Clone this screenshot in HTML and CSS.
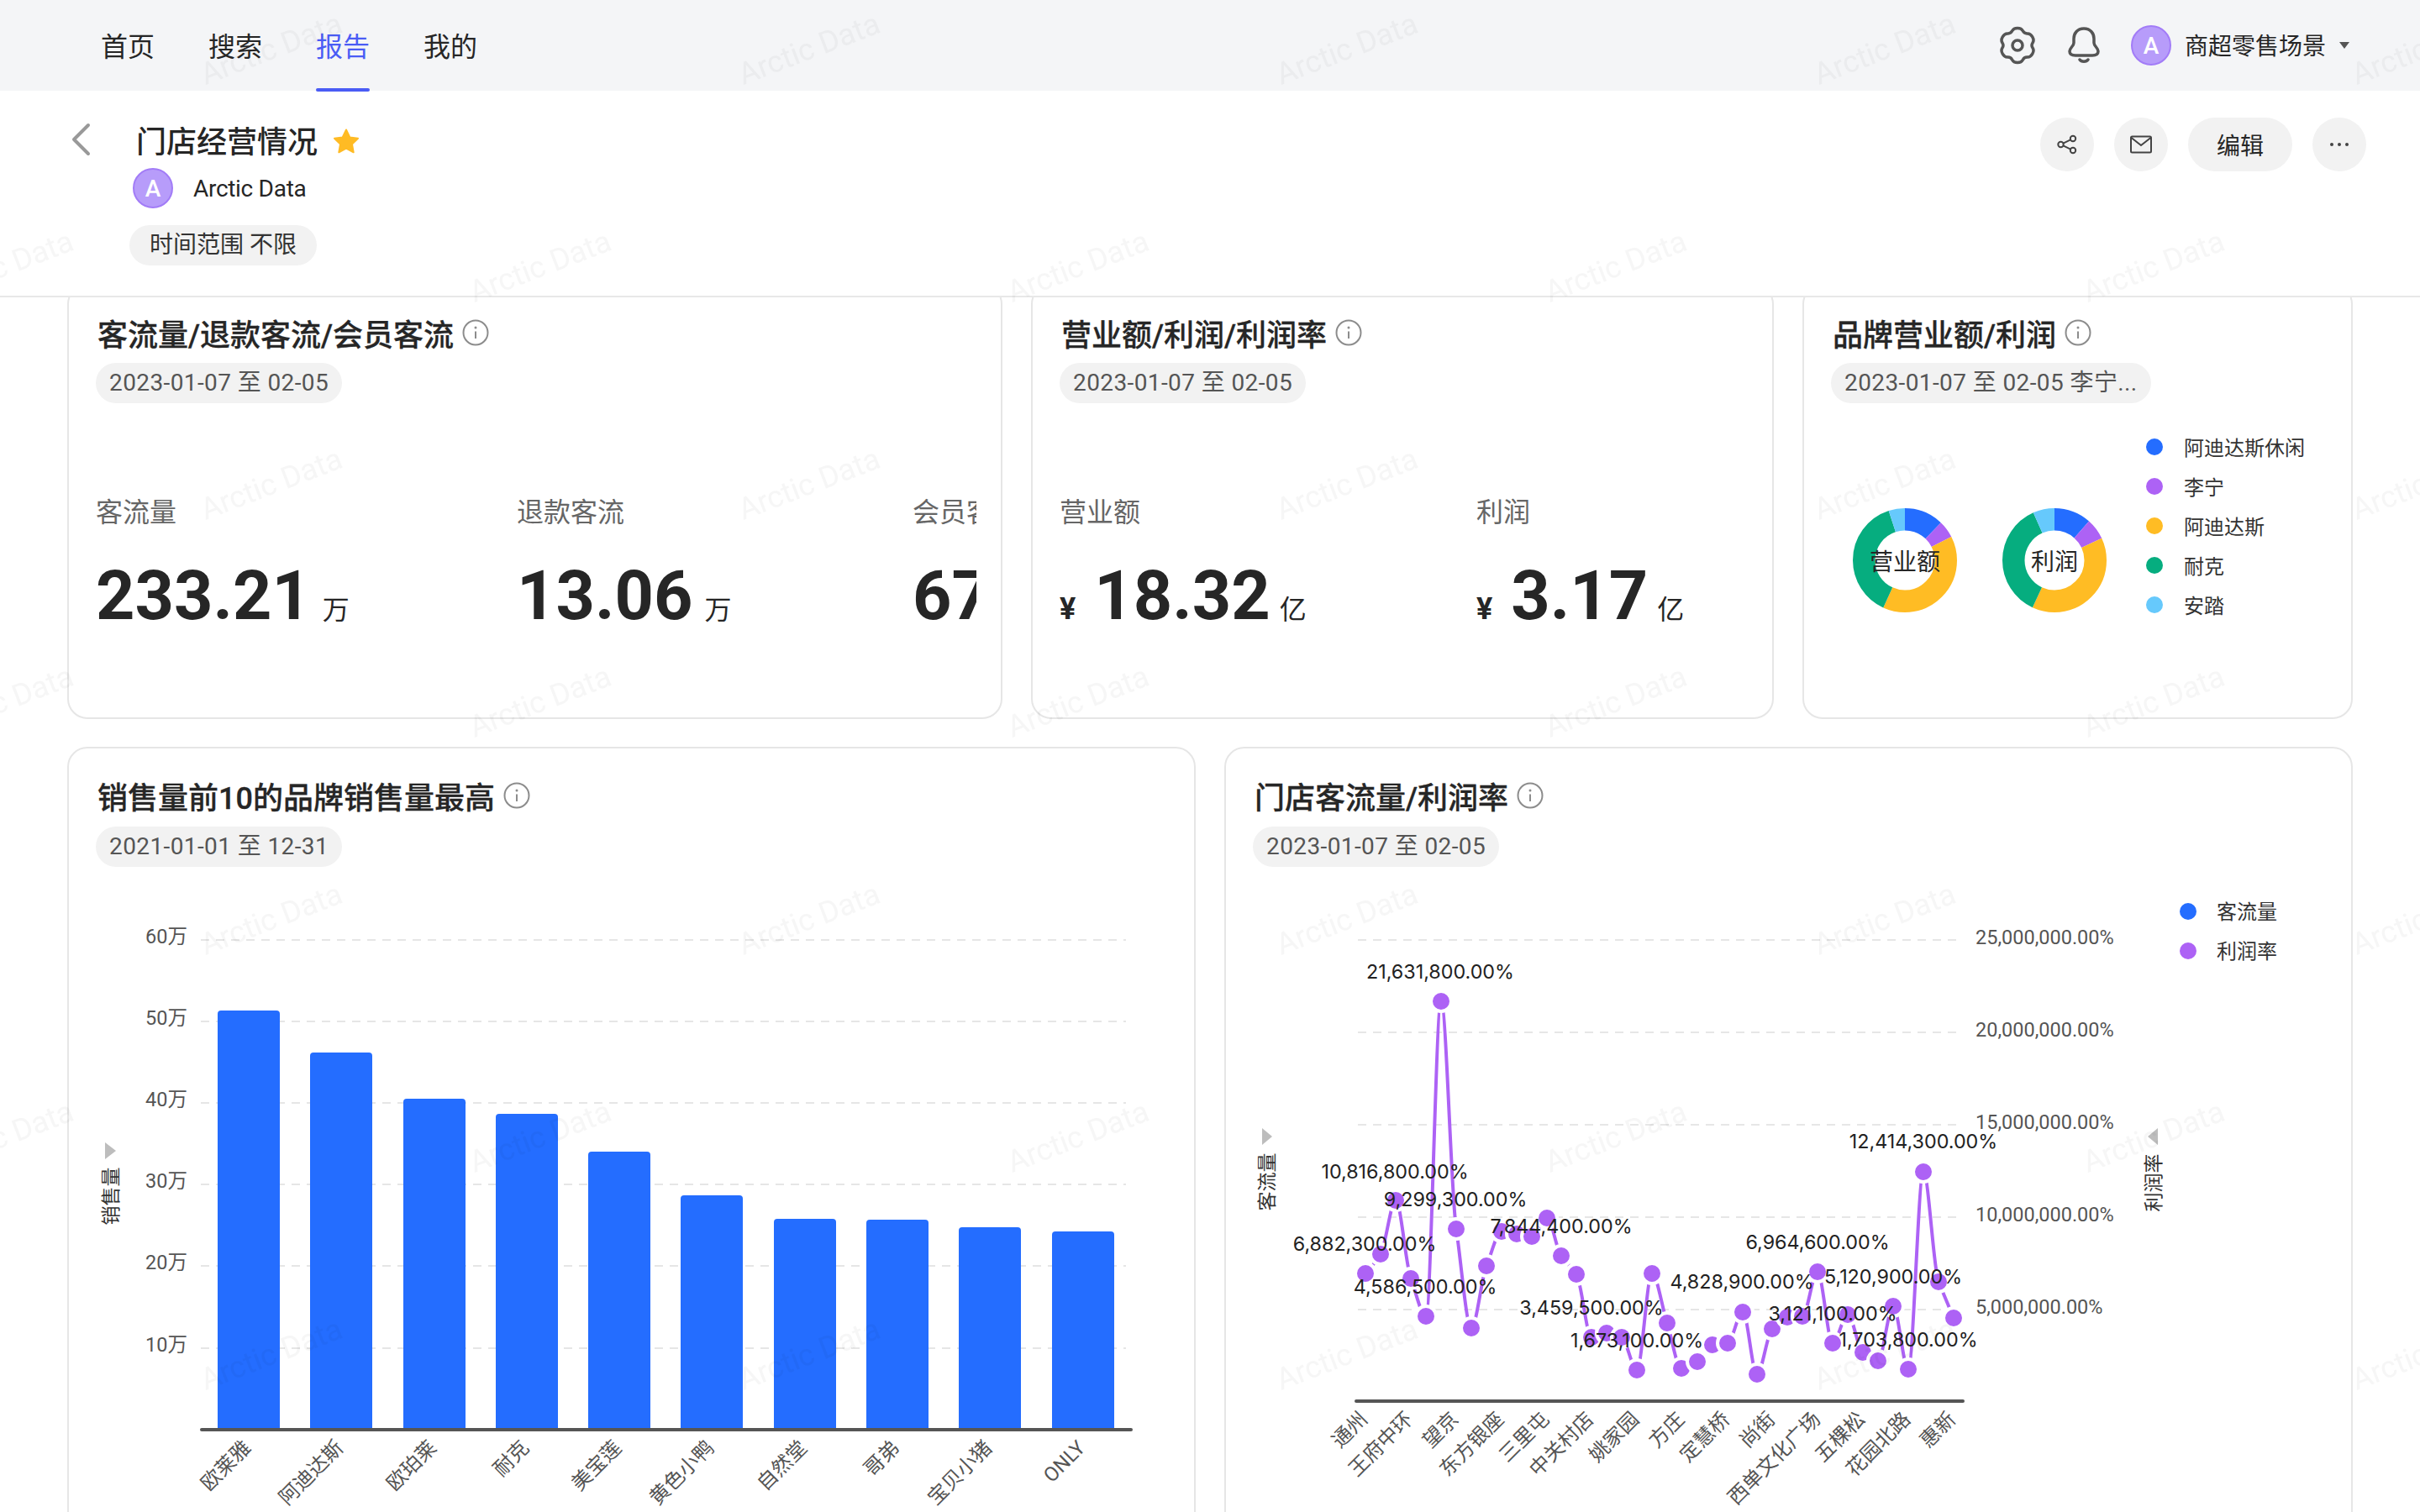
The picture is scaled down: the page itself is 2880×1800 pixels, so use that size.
FILE: index.html
```html
<!DOCTYPE html>
<html lang="zh-CN">
<head>
  <meta charset="UTF-8">
  <title>门店经营情况</title>
  <link rel="stylesheet" href="styles.css">
</head>
<body>
  <header class="topbar">
    <nav class="nav">
      <a class="nav-item">首页</a>
      <a class="nav-item">搜索</a>
      <a class="nav-item active">报告</a>
      <a class="nav-item">我的</a>
    </nav>
    <div class="topbar-right">
      <svg class="icon-gear" viewBox="-2 -1 44 46">
        <path d="M20 1.5Q24.7 1.5 26.35 4.8Q28 8.1 31.7 7.9Q35.4 7.7 37.75 11.8Q40.1 15.9 38.05 18.95Q36 22 38.05 25.05Q40.1 28.1 37.75 32.2Q35.4 36.3 31.7 36.1Q28 35.9 26.35 39.2Q24.7 42.5 20 42.5Q15.3 42.5 13.65 39.2Q12 35.9 8.3 36.1Q4.6 36.3 2.25 32.2Q-.1 28.1 1.95 25.05Q4 22 1.95 18.95Q-.1 15.9 2.25 11.8Q4.6 7.7 8.3 7.9Q12 8.1 13.65 4.8Q15.3 1.5 20 1.5Z"/>
        <circle cx="20" cy="22" r="6"/>
      </svg>
      <svg class="icon-bell" viewBox="0 0 38 44">
        <path d="M19 2C11 2 7 8 7 14V19C7 23 2 25 2 29C2 33 6 34 9 34H29C32 34 36 33 36 29C36 25 31 23 31 19V14C31 8 27 2 19 2Z"/>
        <path d="M14 39C16 42 22 42 24 39"/>
      </svg>
      <span class="avatar">A</span>
      <span class="scene-name">商超零售场景</span>
      <span class="caret"></span>
    </div>
  </header>

  <section class="report-head">
    <svg class="icon-back" viewBox="0 0 24 40"><path d="M21 3L4 20L21 37"/></svg>
    <div class="report-info">
      <div class="report-title">
        <h1>门店经营情况</h1>
        <svg class="icon-star" viewBox="0 0 32 30"><path d="M16 1.5L20.3 10.4L30 11.8L23 18.6L24.7 28.3L16 23.7L7.3 28.3L9 18.6L2 11.8L11.7 10.4Z"/></svg>
      </div>
      <div class="report-author">
        <span class="avatar">A</span>
        <span class="author-name">Arctic Data</span>
      </div>
      <span class="tag">时间范围 不限</span>
    </div>
    <div class="report-actions">
      <button class="round-btn">
        <svg class="icon-line" width="24" height="24" viewBox="0 0 24 24">
          <circle cx="4.5" cy="12" r="3.2"/><circle cx="19" cy="5" r="3.2"/><circle cx="19" cy="19" r="3.2"/>
          <path d="M7.4 10.6L16.1 6.4M7.4 13.4L16.1 17.6"/>
        </svg>
      </button>
      <button class="round-btn">
        <svg class="icon-line" width="28" height="22" viewBox="0 0 28 22">
          <rect x="2" y="1.5" width="24" height="19" rx="1.5"/>
          <path d="M2.5 3L14 12L25.5 3"/>
        </svg>
      </button>
      <button class="round-btn wide">编辑</button>
      <button class="round-btn">
        <svg width="24" height="6" viewBox="0 0 24 6"><circle class="dot" cx="3" cy="3" r="2"/><circle class="dot" cx="12" cy="3" r="2"/><circle class="dot" cx="21" cy="3" r="2"/></svg>
      </button>
    </div>
  </section>

  <main class="report-body">
    <div class="rows">
      <div class="row row-top">
        <section class="card">
          <h2 class="card-title">客流量/退款客流/会员客流
            <svg class="icon-info" viewBox="0 0 32 32"><circle cx="16" cy="16" r="14.5"/><path d="M16 14.5V23"/><circle class="info-dot" cx="16" cy="10" r="1.5"/></svg>
          </h2>
          <span class="tag date">2023-01-07 至 02-05</span>
          <div class="kpis kpis-traffic">
            <div class="kpi"><div class="kpi-label">客流量</div><div class="kpi-value">233.21<span class="kpi-unit">万</span></div></div>
            <div class="kpi"><div class="kpi-label">退款客流</div><div class="kpi-value">13.06<span class="kpi-unit">万</span></div></div>
            <div class="kpi"><div class="kpi-label">会员客流</div><div class="kpi-value">67.43<span class="kpi-unit">万</span></div></div>
          </div>
        </section>

        <section class="card">
          <h2 class="card-title">营业额/利润/利润率
            <svg class="icon-info" viewBox="0 0 32 32"><circle cx="16" cy="16" r="14.5"/><path d="M16 14.5V23"/><circle class="info-dot" cx="16" cy="10" r="1.5"/></svg>
          </h2>
          <span class="tag date">2023-01-07 至 02-05</span>
          <div class="kpis kpis-sales">
            <div class="kpi"><div class="kpi-label">营业额</div><div class="kpi-value"><span class="kpi-currency">¥</span>18.32<span class="kpi-unit">亿</span></div></div>
            <div class="kpi"><div class="kpi-label">利润</div><div class="kpi-value"><span class="kpi-currency">¥</span>3.17<span class="kpi-unit">亿</span></div></div>
          </div>
        </section>

        <section class="card">
          <h2 class="card-title">品牌营业额/利润
            <svg class="icon-info" viewBox="0 0 32 32"><circle cx="16" cy="16" r="14.5"/><path d="M16 14.5V23"/><circle class="info-dot" cx="16" cy="10" r="1.5"/></svg>
          </h2>
          <span class="tag date">2023-01-07 至 02-05 李宁...</span>
          <div class="brand-body">
            <svg class="donuts" width="375" height="320" viewBox="0 0 375 320">
              <g transform="rotate(-90 88 159)">
                <circle class="ring c-blue" cx="88" cy="159" r="48.75" pathLength="360" stroke-dasharray="43.7 360"/>
                <circle class="ring c-purple" cx="88" cy="159" r="48.75" pathLength="360" stroke-dasharray="19.3 360" stroke-dashoffset="-43.7"/>
                <circle class="ring c-yellow" cx="88" cy="159" r="48.75" pathLength="360" stroke-dasharray="141.6 360" stroke-dashoffset="-63"/>
                <circle class="ring c-green" cx="88" cy="159" r="48.75" pathLength="360" stroke-dasharray="137.2 360" stroke-dashoffset="-204.6"/>
                <circle class="ring c-sky" cx="88" cy="159" r="48.75" pathLength="360" stroke-dasharray="18.2 360" stroke-dashoffset="-341.8"/>
              </g>
              <text class="donut-label" x="88" y="171">营业额</text>
              <g transform="rotate(-90 266 159)">
                <circle class="ring c-blue" cx="266" cy="159" r="48.75" pathLength="360" stroke-dasharray="41.5 360"/>
                <circle class="ring c-purple" cx="266" cy="159" r="48.75" pathLength="360" stroke-dasharray="23.5 360" stroke-dashoffset="-41.5"/>
                <circle class="ring c-yellow" cx="266" cy="159" r="48.75" pathLength="360" stroke-dasharray="140 360" stroke-dashoffset="-65"/>
                <circle class="ring c-green" cx="266" cy="159" r="48.75" pathLength="360" stroke-dasharray="131 360" stroke-dashoffset="-205"/>
                <circle class="ring c-sky" cx="266" cy="159" r="48.75" pathLength="360" stroke-dasharray="24 360" stroke-dashoffset="-336"/>
              </g>
              <text class="donut-label" x="266" y="171">利润</text>
            </svg>
            <ul class="legend">
              <li><i class="swatch bg-blue"></i>阿迪达斯休闲</li>
              <li><i class="swatch bg-purple"></i>李宁</li>
              <li><i class="swatch bg-yellow"></i>阿迪达斯</li>
              <li><i class="swatch bg-green"></i>耐克</li>
              <li><i class="swatch bg-sky"></i>安踏</li>
            </ul>
          </div>
        </section>
      </div>

      <div class="row row-bottom">
        <section class="card">
          <h2 class="card-title">销售量前10的品牌销售量最高
            <svg class="icon-info" viewBox="0 0 32 32"><circle cx="16" cy="16" r="14.5"/><path d="M16 14.5V23"/><circle class="info-dot" cx="16" cy="10" r="1.5"/></svg>
          </h2>
          <span class="tag date">2021-01-01 至 12-31</span>
          <svg class="chart" viewBox="114 1040 1275 800">
            <g class="grid">
              <path d="M239 1119H1340M239 1216H1340M239 1313H1340M239 1410H1340M239 1507H1340M239 1605H1340"/>
            </g>
            <g class="axis-y" text-anchor="end">
              <text x="223" y="1123">60万</text>
              <text x="223" y="1220">50万</text>
              <text x="223" y="1317">40万</text>
              <text x="223" y="1414">30万</text>
              <text x="223" y="1511">20万</text>
              <text x="223" y="1609">10万</text>
            </g>
            <polygon class="axis-arrow" points="125,1360 138,1370 125,1380"/>
            <text class="axis-title" transform="rotate(-90 140 1424)" x="140" y="1424">销售量</text>
            <g class="c-bars">
              <path d="M259 1702V1207Q259 1203 263 1203H329Q333 1203 333 1207V1702Z"/>
              <path d="M369 1702V1257Q369 1253 373 1253H439Q443 1253 443 1257V1702Z"/>
              <path d="M480 1702V1312Q480 1308 484 1308H550Q554 1308 554 1312V1702Z"/>
              <path d="M590 1702V1330Q590 1326 594 1326H660Q664 1326 664 1330V1702Z"/>
              <path d="M700 1702V1375Q700 1371 704 1371H770Q774 1371 774 1375V1702Z"/>
              <path d="M810 1702V1427Q810 1423 814 1423H880Q884 1423 884 1427V1702Z"/>
              <path d="M921 1702V1455Q921 1451 925 1451H991Q995 1451 995 1455V1702Z"/>
              <path d="M1031 1702V1456Q1031 1452 1035 1452H1101Q1105 1452 1105 1456V1702Z"/>
              <path d="M1141 1702V1465Q1141 1461 1145 1461H1211Q1215 1461 1215 1465V1702Z"/>
              <path d="M1252 1702V1470Q1252 1466 1256 1466H1322Q1326 1466 1326 1470V1702Z"/>
            </g>
            <path class="axis-line" d="M240 1702H1346"/>
            <g class="axis-x">
              <text transform="rotate(-45 300 1725)" x="300" y="1725">欧莱雅</text>
              <text transform="rotate(-45 410 1725)" x="410" y="1725">阿迪达斯</text>
              <text transform="rotate(-45 521 1725)" x="521" y="1725">欧珀莱</text>
              <text transform="rotate(-45 631 1725)" x="631" y="1725">耐克</text>
              <text transform="rotate(-45 741 1725)" x="741" y="1725">美宝莲</text>
              <text transform="rotate(-45 851 1725)" x="851" y="1725">黄色小鸭</text>
              <text transform="rotate(-45 962 1725)" x="962" y="1725">自然堂</text>
              <text transform="rotate(-45 1072 1725)" x="1072" y="1725">哥弟</text>
              <text transform="rotate(-45 1182 1725)" x="1182" y="1725">宝贝小猪</text>
              <text transform="rotate(-45 1293 1725)" x="1293" y="1725">ONLY</text>
            </g>
          </svg>
        </section>

        <section class="card">
          <h2 class="card-title">门店客流量/利润率
            <svg class="icon-info" viewBox="0 0 32 32"><circle cx="16" cy="16" r="14.5"/><path d="M16 14.5V23"/><circle class="info-dot" cx="16" cy="10" r="1.5"/></svg>
          </h2>
          <span class="tag date">2023-01-07 至 02-05</span>
          <svg class="chart" viewBox="1491 1040 1275 800">
            <g class="grid">
              <path d="M1616 1119H2332M1616 1229H2332M1616 1339H2332M1616 1449H2332M1616 1559H2332"/>
            </g>
            <g class="axis-y">
              <text x="2351" y="1124">25,000,000.00%</text>
              <text x="2351" y="1234">20,000,000.00%</text>
              <text x="2351" y="1344">15,000,000.00%</text>
              <text x="2351" y="1454">10,000,000.00%</text>
              <text x="2351" y="1564">5,000,000.00%</text>
            </g>
            <polygon class="axis-arrow" points="1502,1343 1514,1353 1502,1363"/>
            <text class="axis-title" transform="rotate(-90 1516 1407)" x="1516" y="1407">客流量</text>
            <polygon class="axis-arrow" points="2568,1343 2556,1353 2568,1363"/>
            <text class="axis-title" transform="rotate(-90 2571 1408)" x="2571" y="1408">利润率</text>

            <path class="trend" d="M1625 1516C1631 1512 1637 1501 1643 1493C1649 1485 1655 1429 1661 1429C1667 1429 1673 1507 1679 1522C1685 1537 1691 1567 1697 1567C1703 1567 1709 1192 1715 1192C1721 1192 1727 1424 1733 1463C1739 1502 1745 1581 1751 1581C1757 1581 1763 1521 1769 1507C1775 1493 1781 1466 1787 1466C1793 1466 1799 1468 1805 1469C1811 1470 1817 1472 1823 1472C1829 1472 1835 1450 1841 1450C1847 1450 1852 1488 1858 1495C1864 1502 1870 1510 1876 1517C1882 1524 1888 1592 1894 1592C1900 1592 1906 1587 1912 1587C1918 1587 1924 1590 1930 1592C1936 1594 1942 1631 1948 1631C1954 1631 1960 1516 1966 1516C1972 1516 1978 1557 1984 1575C1990 1593 1995 1629 2001 1629C2007 1629 2014 1624 2020 1621C2026 1618 2032 1602 2038 1601C2044 1600 2050 1600 2056 1599C2062 1598 2068 1562 2074 1562C2080 1562 2085 1636 2091 1636C2097 1636 2103 1587 2109 1582C2115 1577 2121 1568 2127 1568C2133 1568 2139 1567 2145 1567C2151 1567 2157 1514 2163 1514C2169 1514 2175 1599 2181 1599C2187 1599 2193 1565 2199 1565C2205 1565 2211 1607 2217 1610C2223 1613 2229 1620 2235 1620C2241 1620 2247 1555 2253 1555C2259 1555 2265 1630 2271 1630C2277 1630 2283 1395 2289 1395C2295 1395 2301 1512 2307 1526C2313 1540 2319 1555 2325 1569"/>
            <g class="trend-dots">
              <circle cx="1625" cy="1516" r="12"/><circle cx="1643" cy="1493" r="12"/><circle cx="1661" cy="1429" r="12"/><circle cx="1679" cy="1522" r="12"/>
              <circle cx="1697" cy="1567" r="12"/><circle cx="1715" cy="1192" r="12"/><circle cx="1733" cy="1463" r="12"/><circle cx="1751" cy="1581" r="12"/>
              <circle cx="1769" cy="1507" r="12"/><circle cx="1787" cy="1466" r="12"/><circle cx="1805" cy="1469" r="12"/><circle cx="1823" cy="1472" r="12"/>
              <circle cx="1841" cy="1450" r="12"/><circle cx="1858" cy="1495" r="12"/><circle cx="1876" cy="1517" r="12"/><circle cx="1894" cy="1592" r="12"/>
              <circle cx="1912" cy="1587" r="12"/><circle cx="1930" cy="1592" r="12"/><circle cx="1948" cy="1631" r="12"/><circle cx="1966" cy="1516" r="12"/>
              <circle cx="1984" cy="1575" r="12"/><circle cx="2001" cy="1629" r="12"/><circle cx="2020" cy="1621" r="12"/><circle cx="2038" cy="1601" r="12"/>
              <circle cx="2056" cy="1599" r="12"/><circle cx="2074" cy="1562" r="12"/><circle cx="2091" cy="1636" r="12"/><circle cx="2109" cy="1582" r="12"/>
              <circle cx="2127" cy="1568" r="12"/><circle cx="2145" cy="1567" r="12"/><circle cx="2163" cy="1514" r="12"/><circle cx="2181" cy="1599" r="12"/>
              <circle cx="2199" cy="1565" r="12"/><circle cx="2217" cy="1610" r="12"/><circle cx="2235" cy="1620" r="12"/><circle cx="2253" cy="1555" r="12"/>
              <circle cx="2271" cy="1630" r="12"/><circle cx="2289" cy="1395" r="12"/><circle cx="2307" cy="1526" r="12"/><circle cx="2325" cy="1569" r="12"/>
            </g>
            <g class="trend-labels" text-anchor="middle">
              <text x="1714" y="1165">21,631,800.00%</text>
              <text x="1660" y="1403">10,816,800.00%</text>
              <text x="1732" y="1436">9,299,300.00%</text>
              <text x="1624" y="1489">6,882,300.00%</text>
              <text x="1696" y="1540">4,586,500.00%</text>
              <text x="1858" y="1468">7,844,400.00%</text>
              <text x="1894" y="1565">3,459,500.00%</text>
              <text x="1948" y="1604">1,673,100.00%</text>
              <text x="2163" y="1487">6,964,600.00%</text>
              <text x="2073" y="1534">4,828,900.00%</text>
              <text x="2253" y="1528">5,120,900.00%</text>
              <text x="2181" y="1572">3,121,100.00%</text>
              <text x="2271" y="1603">1,703,800.00%</text>
              <text x="2289" y="1367">12,414,300.00%</text>
            </g>
            <path class="axis-line" d="M1614 1668H2336"/>
            <g class="axis-x">
              <text transform="rotate(-45 1629 1691)" x="1629" y="1691">通州</text>
              <text transform="rotate(-45 1683 1691)" x="1683" y="1691">王府中环</text>
              <text transform="rotate(-45 1737 1691)" x="1737" y="1691">望京</text>
              <text transform="rotate(-45 1791 1691)" x="1791" y="1691">东方银座</text>
              <text transform="rotate(-45 1845 1691)" x="1845" y="1691">三里屯</text>
              <text transform="rotate(-45 1898 1691)" x="1898" y="1691">中关村店</text>
              <text transform="rotate(-45 1952 1691)" x="1952" y="1691">姚家园</text>
              <text transform="rotate(-45 2006 1691)" x="2006" y="1691">方庄</text>
              <text transform="rotate(-45 2060 1691)" x="2060" y="1691">定慧桥</text>
              <text transform="rotate(-45 2114 1691)" x="2114" y="1691">尚街</text>
              <text transform="rotate(-45 2168 1691)" x="2168" y="1691">西单文化广场</text>
              <text transform="rotate(-45 2221 1691)" x="2221" y="1691">五棵松</text>
              <text transform="rotate(-45 2275 1691)" x="2275" y="1691">花园北路</text>
              <text transform="rotate(-45 2329 1691)" x="2329" y="1691">惠新</text>
            </g>
            <circle class="bg-dot-blue" cx="2604" cy="1085" r="10"/>
            <text class="chart-legend" x="2638" y="1094">客流量</text>
            <circle class="bg-dot-purple" cx="2604" cy="1132" r="10"/>
            <text class="chart-legend" x="2638" y="1141">利润率</text>
          </svg>
        </section>
      </div>
    </div>
  </main>

  <svg class="watermark" width="2880" height="1800">
    <defs>
      <pattern id="wm" width="640" height="518" patternUnits="userSpaceOnUse">
        <text transform="rotate(-21 324 61)" x="324" y="70">Arctic Data</text>
        <text transform="rotate(-21 4 320)" x="4" y="329">Arctic Data</text>
        <text transform="rotate(-21 644 320)" x="644" y="329">Arctic Data</text>
      </pattern>
    </defs>
    <rect width="2880" height="1800" fill="url(#wm)"/>
  </svg>
</body>
</html>
```

FILE: styles.css
```css
* {
  box-sizing: border-box;
}

html,
body {
  margin: 0;
  padding: 0;
}

body {
  display: flex;
  flex-direction: column;
  height: 1800px;
  overflow: hidden;
  background: #fff;
  color: #262626;
  font-family: Roboto, "Noto Sans CJK SC", sans-serif;
}

/* top bar */
.topbar {
  display: flex;
  flex: none;
  justify-content: space-between;
  align-items: center;
  height: 108px;
  padding: 0 84px 0 120px;
  background: #f4f5f7;
}

.nav {
  display: flex;
  gap: 64px;
}

.nav-item {
  position: relative;
  display: flex;
  align-items: center;
  height: 108px;
  padding-bottom: 3px;
  font-size: 32px;
  color: #262626;
}

.nav-item.active {
  color: #4a5cf5;
}

.nav-item.active::after {
  content: "";
  position: absolute;
  left: 0;
  right: 0;
  bottom: -1px;
  height: 4px;
  border-radius: 2px;
  background: #4a5cf5;
}

.topbar-right {
  display: flex;
  align-items: center;
}

.icon-gear {
  width: 44px;
  height: 46px;
  margin-right: 38px;
  fill: none;
  stroke: #555;
  stroke-width: 3.5;
}

.icon-bell {
  width: 38px;
  height: 44px;
  margin-right: 37px;
  fill: none;
  stroke: #555;
  stroke-width: 3.5;
  stroke-linecap: round;
}

.avatar {
  display: flex;
  justify-content: center;
  align-items: center;
  width: 48px;
  height: 48px;
  border: 2px solid #a27cf7;
  border-radius: 50%;
  background: #b79cfa;
  color: #fff;
  font-size: 28px;
  font-weight: 500;
}

.scene-name {
  margin: -3px 0 0 16px;
  font-size: 28px;
  color: #262626;
}

.caret {
  width: 0;
  height: 0;
  margin-left: 16px;
  border-top: 8px solid #555;
  border-left: 6px solid transparent;
  border-right: 6px solid transparent;
}

/* report header */
.report-head {
  display: flex;
  flex: none;
  height: 246px;
  padding: 40px 64px 0 84px;
  border-bottom: 2px solid #e8e8e8;
}

.icon-back {
  width: 24px;
  height: 40px;
  margin-top: -2px;
  fill: none;
  stroke: #999;
  stroke-width: 4;
  stroke-linecap: round;
  stroke-linejoin: round;
}

.report-info {
  display: flex;
  flex-direction: column;
  flex: 1;
  align-items: flex-start;
  margin-left: 46px;
}

.report-title {
  display: flex;
  align-items: center;
  gap: 18px;
  margin-left: 8px;
  height: 44px;
}

.report-title h1 {
  margin: 0;
  font-size: 36px;
  line-height: 44px;
  font-weight: 500;
}

.icon-star {
  width: 32px;
  height: 30px;
  margin-top: -4px;
  fill: #ffbb24;
  stroke: #ffbb24;
  stroke-width: 2;
  stroke-linejoin: round;
}

.report-author {
  display: flex;
  align-items: center;
  gap: 24px;
  height: 48px;
  margin: 8px 0 20px 4px;
  font-size: 28px;
}

.author-name {
  letter-spacing: -0.3px;
}

.tag {
  display: inline-block;
  height: 48px;
  padding: 0 24px;
  border-radius: 24px;
  background: #f2f2f2;
  font-size: 28px;
  line-height: 48px;
  color: #333;
}

.report-actions {
  display: flex;
  gap: 24px;
  height: 64px;
  margin-top: -8px;
}

.round-btn {
  display: flex;
  justify-content: center;
  align-items: center;
  width: 64px;
  height: 64px;
  padding: 0;
  border: none;
  border-radius: 32px;
  background: #f2f2f2;
  color: #262626;
  font-family: inherit;
  font-size: 28px;
}

.round-btn.wide {
  width: 124px;
}

.icon-line {
  fill: none;
  stroke: #444;
  stroke-width: 2;
}

.dot {
  fill: #444;
}

/* cards */
.report-body {
  flex: 1;
  min-height: 0;
  padding: 0 80px;
  overflow: hidden;
}

.rows {
  margin-top: -16px;
}

.row {
  display: grid;
  gap: 34px;
}

.row-top {
  grid-template-columns: 1113px 884px 1fr;
  height: 518px;
  margin-bottom: 33px;
}

.row-bottom {
  grid-template-columns: 1fr 1fr;
  height: 1200px;
}

.card {
  padding: 32px 32px 0;
  border: 2px solid #e6e6e6;
  border-radius: 24px;
  background: #fff;
  overflow: hidden;
}

.card-title {
  display: flex;
  align-items: center;
  gap: 10px;
  height: 48px;
  margin: 0 0 12px 2px;
  font-size: 36px;
  font-weight: 500;
  color: #262626;
  -webkit-text-stroke: 0.3px #262626;
}

.row-bottom .card-title {
  margin-bottom: 13px;
}

.icon-info {
  width: 32px;
  height: 32px;
  fill: none;
  stroke: #8c8c8c;
  stroke-width: 2;
}

.info-dot {
  fill: #8c8c8c;
  stroke: none;
}

.tag.date {
  display: table;
  padding: 0 16px;
  color: #555;
  letter-spacing: 0.4px;
}

/* kpi */
.kpis {
  display: grid;
  margin-top: 108px;
  overflow: hidden;
  white-space: nowrap;
}

.kpis-traffic {
  grid-template-columns: 501px 471px 1fr;
  margin-right: -3px;
}

.kpis-sales {
  grid-template-columns: 496px 1fr;
}

.kpis-sales .kpi-unit {
  margin-left: 11px;
}

.kpi {
  min-width: 0;
}

.kpi-label {
  font-size: 32px;
  line-height: 44px;
  color: #666;
}

.kpi-value {
  margin-top: 28px;
  font-size: 81px;
  line-height: 100px;
  font-weight: 700;
  color: #262626;
}

.kpi-unit {
  margin-left: 14px;
  font-size: 32px;
  font-weight: 400;
}

.kpi-currency {
  margin-right: 22px;
  font-size: 36px;
  font-weight: 700;
}

/* brand donuts */
.brand-body {
  display: flex;
  margin-top: 28px;
}

.donuts {
  flex: none;
}

.ring {
  fill: none;
  stroke-width: 26.5;
}

.c-blue { stroke: #246dff; }
.c-purple { stroke: #ad62f5; }
.c-yellow { stroke: #ffbc24; }
.c-green { stroke: #06ad7f; }
.c-sky { stroke: #66c9fc; }

.bg-blue { background: #246dff; }
.bg-purple { background: #ad62f5; }
.bg-yellow { background: #ffbc24; }
.bg-green { background: #06ad7f; }
.bg-sky { background: #66c9fc; }

.donut-label {
  font-size: 28px;
  text-anchor: middle;
  fill: #262626;
}

.legend {
  flex: none;
  margin: 0;
  padding: 0;
  list-style: none;
  font-size: 24px;
  color: #333;
}

.legend li {
  display: flex;
  align-items: center;
  height: 47px;
}

.swatch {
  width: 20px;
  height: 20px;
  margin-right: 25px;
  border-radius: 50%;
}

/* charts */
.chart {
  display: block;
  width: 1275px;
  height: 800px;
  margin: 8px 0 0 0;
}

.grid {
  fill: none;
  stroke: #e6e6e6;
  stroke-width: 2;
  stroke-dasharray: 10 8;
}

.axis-y text {
  font-size: 23.5px;
  fill: #555;
}

.axis-x text {
  font-size: 24px;
  text-anchor: end;
  fill: #555;
}

.axis-title {
  font-size: 23px;
  text-anchor: middle;
  fill: #333;
}

.axis-arrow {
  fill: #bdbdbd;
}

.axis-line {
  fill: none;
  stroke: #555;
  stroke-width: 4;
  stroke-linecap: round;
}

.c-bars path {
  fill: #246dff;
}

.trend {
  fill: none;
  stroke: #ad62f5;
  stroke-width: 4;
  stroke-linejoin: round;
}

.trend-dots circle {
  fill: #ad62f5;
  stroke: #fff;
  stroke-width: 4;
}

.trend-labels text {
  font-family: Inter, sans-serif;
  font-size: 23.3px;
  fill: #222;
}

.bg-dot-blue { fill: #246dff; }
.bg-dot-purple { fill: #ad62f5; }

.chart-legend {
  font-size: 24px;
  fill: #333;
}

/* watermark sits over everything */
.watermark {
  position: fixed;
  top: 0;
  left: 0;
  pointer-events: none;
}

.watermark text {
  font-size: 36px;
  text-anchor: middle;
  fill: rgba(0, 0, 0, 0.035);
}
```
